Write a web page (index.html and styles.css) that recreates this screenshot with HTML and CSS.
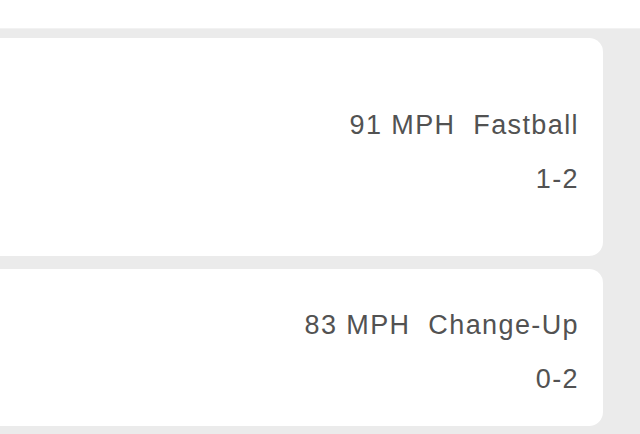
FILE: index.html
```html
<!DOCTYPE html>
<html lang="en">
<head>
  <meta charset="UTF-8">
  <title>Pitches</title>
  <meta name="viewport" content="width=device-width, initial-scale=1.0">
  <link rel="stylesheet" href="styles.css">
</head>
<body>
  <header class="barra"></header>

  <main class="lista">
    <div class="tarjeta tarjeta-alta">
      <p class="lanzamiento">91 MPH  Fastball</p>
      <p class="cuenta">1-2</p>
    </div>
    <div class="tarjeta tarjeta-baja">
      <p class="lanzamiento">83 MPH  Change-Up</p>
      <p class="cuenta">0-2</p>
    </div>
  </main>
</body>
</html>
```

FILE: styles.css
```css
body {
  margin: 0;
  background: #ebebeb;
  font-family: "Liberation Sans", Arial, sans-serif;
  overflow: hidden;
}

.barra {
  height: 28px;
  background: #ffffff;
  border-bottom: 1px solid #f2f2f2;
}

.lista {
  display: flex;
  flex-direction: column;
  gap: 13px;
  padding: 9px 37px 0 0;
}

.tarjeta {
  background: #ffffff;
  margin-left: -20px;
  border-radius: 14px;
  padding-right: 24px;
  text-align: right;
  color: #525252;
}
.tarjeta-alta { padding-top: 72px; padding-bottom: 62px; }
.tarjeta-baja { padding-top: 41px; padding-bottom: 32px; }

.tarjeta p {
  margin: 0;
  font-size: 27px;
  line-height: 30px;
  letter-spacing: 1.4px;
  white-space: pre;
}
.tarjeta p + p { margin-top: 24px; }
```
